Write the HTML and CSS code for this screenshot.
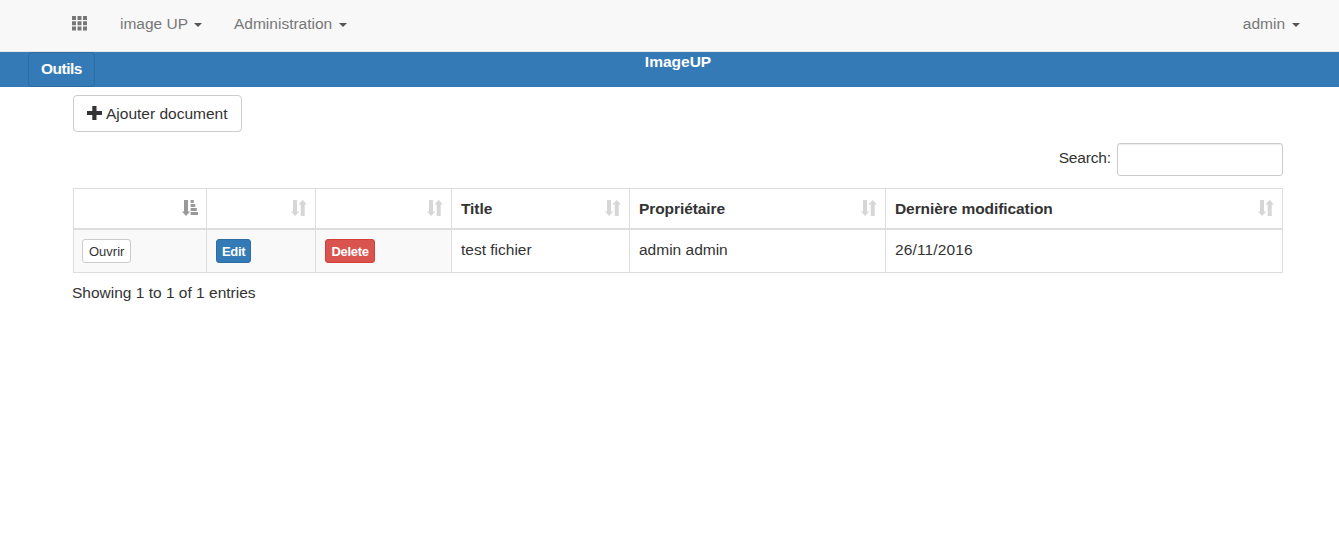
FILE: index.html
```html
<!DOCTYPE html>
<html lang="fr">
<head>
<meta charset="utf-8">
<title>ImageUP</title>
<link rel="stylesheet" href="styles.css">
</head>
<body>
<svg class="defs" width="0" height="0">
  <symbol id="sort" viewBox="0 0 16 16"><path d="M2 0h4v11.6h2.3L4.1 16 0 11.6h2zM9.7 16V4.4H7.4L11.7 0 16 4.4h-2.3V16z"/></symbol>
  <symbol id="sort-asc" viewBox="0 0 16 16"><path d="M2 0h4v11.6h2.2L4 16 0 11.6h2zM8.6 0h3.2v2.9H8.6zM8.6 4h4.7v2.9H8.6zM8.6 8h6.2v2.9H8.6zM8.6 12H16v2.9H8.6z"/></symbol>
</svg>
<nav class="navbar">
  <a class="apps"><svg width="15" height="15" viewBox="0 0 15 15"><path d="M0 0h4v4H0zM5.5 0h4v4h-4zM11 0h4v4h-4zM0 5.3h4v4H0zM5.5 5.3h4v4h-4zM11 5.3h4v4h-4zM0 10.6h4v4H0zM5.5 10.6h4v4h-4zM11 10.6h4v4h-4z"/></svg></a>
  <a class="menu menu-image"><span>image UP</span><i class="caret"></i></a>
  <a class="menu menu-administration"><span>Administration</span><i class="caret"></i></a>
  <a class="menu menu-user"><span>admin</span><i class="caret"></i></a>
</nav>
<header class="toolbar">
  <button class="tools">Outils</button>
  <strong class="brand">ImageUP</strong>
</header>
<main class="container">
  <button class="add"><svg width="15" height="14" viewBox="0 0 15 14"><path d="M5.3 0h4.2v4.9H15v4.2H9.5V14H5.3V9.1H0V4.9h5.3z"/></svg><span>Ajouter document</span></button>
  <label class="search"><span>Search:</span><input type="search"></label>
  <table class="table">
    <colgroup><col class="c1"><col class="c2"><col class="c3"><col class="c4"><col class="c5"><col class="c6"></colgroup>
    <thead><tr>
      <th><div class="head"><span></span><svg class="sorted"><use href="#sort-asc"/></svg></div></th>
      <th><div class="head"><span></span><svg><use href="#sort"/></svg></div></th>
      <th><div class="head"><span></span><svg><use href="#sort"/></svg></div></th>
      <th><div class="head"><span>Title</span><svg><use href="#sort"/></svg></div></th>
      <th><div class="head"><span>Propriétaire</span><svg><use href="#sort"/></svg></div></th>
      <th><div class="head"><span>Dernière modification</span><svg><use href="#sort"/></svg></div></th>
    </tr></thead>
    <tbody><tr>
      <td class="action"><button class="btn">Ouvrir</button></td>
      <td class="action"><button class="btn primary">Edit</button></td>
      <td class="action"><button class="btn danger">Delete</button></td>
      <td>test fichier</td>
      <td>admin admin</td>
      <td class="date">26/11/2016</td>
    </tr></tbody>
  </table>
  <p class="info">Showing 1 to 1 of 1 entries</p>
</main>
</body>
</html>
```
FILE: styles.css
```css
* { box-sizing: border-box; }
body {
  margin: 0;
  background: #fff;
  color: #333;
  font: 15.5px/22px "Liberation Sans", Arial, sans-serif;
}
button { font: inherit; margin: 0; }
.defs { display: block; height: 0; }
.navbar {
  display: flex;
  align-items: center;
  height: 52px;
  padding: 0 39px 4px 72px;
  background: #f8f8f8;
  border-bottom: 1px solid #e7e7e7;
  color: #777;
}
.apps { display: flex; width: 48px; }
.apps svg { fill: #777; }
.menu { display: flex; align-items: center; gap: 7px; }
.menu-image { width: 114px; }
.menu-image .caret { margin-left: -1px; }
.menu-user { margin-left: auto; }
.caret {
  margin-top: 3px;
  border: 4px solid transparent;
  border-top-color: #555;
  border-bottom: 0;
}
.toolbar {
  display: grid;
  grid-template-columns: 95px 1fr 78px;
  height: 35px;
  background: #337ab7;
  color: #fff;
}
.tools {
  width: 67px;
  height: 35px;
  margin-left: 28px;
  padding: 0 0 2px;
  border: 1px solid #2e6da4;
  border-radius: 4px;
  background: #337ab7;
  color: #fff;
  font-weight: bold;
  letter-spacing: -.5px;
}
.brand { line-height: 20px; text-align: center; }
.container {
  display: flex;
  flex-direction: column;
  padding: 8px 56px 0 73px;
}
.add {
  display: flex;
  align-items: center;
  gap: 5px;
  align-self: flex-start;
  width: 169px;
  height: 37px;
  padding: 0 0 0 12px;
  border: 1px solid #ccc;
  border-radius: 4px;
  background: #fff;
  color: #333;
  white-space: nowrap;
}
.add svg { fill: #333; margin: 0 -1px 1px 1px; }
.search {
  display: flex;
  align-self: flex-end;
  gap: 6px;
  margin-top: 11px;
  line-height: 30px;
}
.search span { letter-spacing: -.15px; }
.search input {
  width: 166px;
  height: 33px;
  border: 1px solid #ccc;
  border-radius: 3px;
  background: #fff;
  box-shadow: inset 0 1px 1px rgba(0, 0, 0, .075);
}
.table {
  width: 1210px;
  margin-top: 12px;
  border-collapse: separate;
  border-spacing: 0;
  table-layout: fixed;
  border-top: 1px solid #ddd;
  border-left: 1px solid #ddd;
}
.c1 { width: 133px; }
.c2 { width: 109px; }
.c3 { width: 136px; }
.c4 { width: 178px; }
.c5 { width: 256px; }
.c6 { width: 397px; }
th, td { border: 0 solid #ddd; border-right-width: 1px; text-align: left; }
th { height: 41px; padding: 0 8px 0 9px; border-bottom-width: 2px; letter-spacing: -.08px; }
td { height: 43px; padding: 9px 9px 0; border-bottom-width: 1px; vertical-align: top; }
.date { letter-spacing: .13px; }
.head { display: flex; align-items: center; justify-content: space-between; height: 22px; }
.head svg { width: 16px; height: 16px; margin-bottom: 1px; fill: #d6d6d6; }
.head .sorted { fill: #999; }
.action { background: #f9f9f9; padding: 9px 8px 0; }
.action + .action { padding-left: 9px; }
.btn {
  display: block;
  height: 24px;
  padding: 0 6px;
  border: 1px solid #ccc;
  border-radius: 3px;
  background: #fff;
  color: #333;
  font-size: 13px;
  line-height: 23px;
}
.primary, .danger { padding: 0 5px; color: #fff; font-weight: bold; letter-spacing: -.3px; }
.primary { background: #337ab7; border-color: #2e6da4; }
.danger { width: 50px; background: #d9534f; border-color: #d43f3a; }
.info { margin: 9px 0 0 -1px; }
```
